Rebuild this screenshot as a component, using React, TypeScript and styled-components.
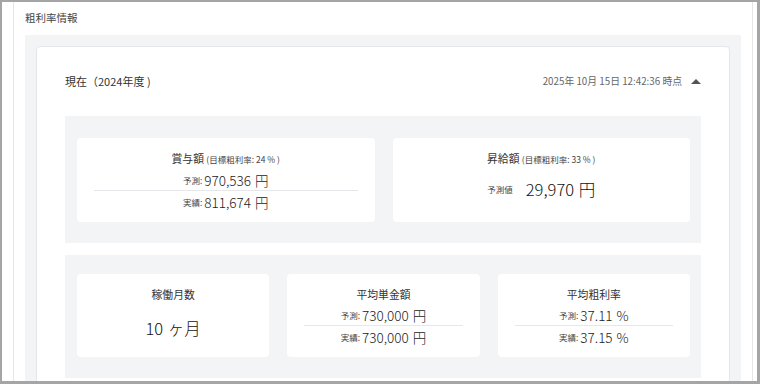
import React from "react";
import styled, { createGlobalStyle } from "styled-components";

const Global = createGlobalStyle`
  html, body { margin: 0; padding: 0; background: #ffffff; }
  body { font-family: "Noto Sans CJK JP", "Noto Sans", sans-serif; color: #333; }
  * { box-sizing: border-box; }
`;

const Frame = styled.div`
  width: 760px;
  height: 384px;
  border-style: solid;
  border-color: #a5a5a5;
  border-width: 2px 3px 3px 2px;
  background: #fff;
  overflow: hidden;
`;

const Section = styled.section`
  margin: 0 4px 0 11px;
  padding: 8px 11px 0;
  border-left: 1px solid #e6e6e6;
  border-right: 1px solid #e6e6e6;
  height: 100%;
`;

const SectionTitle = styled.h2`
  margin: 0 0 10px;
  font-size: 10.5px;
  line-height: 15px;
  font-weight: 400;
  color: #444;
`;

const GrayArea = styled.div`
  background: #f3f4f6;
  padding: 11px 11px 0;
  height: 100%;
`;

const Card = styled.div`
  background: #fff;
  border: 1px solid #e4e6ea;
  border-radius: 4px;
  padding: 0 28px;
  height: 100%;
`;

const Header = styled.div`
  display: flex;
  align-items: center;
  justify-content: space-between;
  height: 69px;
  padding-bottom: 1px;
`;

const HeaderTitle = styled.div`
  font-size: 11px;
  color: #333;
`;

const HeaderRight = styled.div`
  display: flex;
  align-items: center;
  gap: 9px;
  font-size: 9.8px;
  color: #666;
`;

const Caret = styled.span`
  width: 0;
  height: 0;
  border-left: 5px solid transparent;
  border-right: 5px solid transparent;
  border-bottom: 5px solid #555;
`;

const Panel = styled.div<{ $cols: number; $top: number }>`
  display: grid;
  grid-template-columns: repeat(${(p) => p.$cols}, 1fr);
  gap: 18px;
  background: #f3f4f6;
  padding: ${(p) => p.$top}px 11px 21px 12px;
  margin-bottom: 12px;
`;

const StatCard = styled.div`
  background: #fff;
  border-radius: 4px;
  padding: 12px 0 11px;
  display: flex;
  flex-direction: column;
  align-items: center;
  text-align: center;
`;

const StatTitle = styled.div`
  font-size: 10.8px;
  line-height: 16px;
  color: #333;
  margin-bottom: 3px;
`;

const Note = styled.span`
  font-size: 8.5px;
  color: #444;
`;

const Rows = styled.div`
  align-self: stretch;
  padding: 0 17px;
`;

const Row = styled.div<{ $divider?: boolean }>`
  display: flex;
  align-items: center;
  justify-content: center;
  border-top: ${(p) => (p.$divider ? "1px solid #e5e7eb" : "none")};
  height: ${(p) => (p.$divider ? "21px" : "20px")};
  padding-top: ${(p) => (p.$divider ? "1px" : "0")};
`;

const Label = styled.span`
  font-size: 8.5px;
  color: #444;
`;

const Value = styled.span`
  font-size: 13.5px;
  font-weight: 300;
  color: #222;
  margin-left: 2px;
  word-spacing: 1px;
`;

const BigRow = styled.div<{ $gap: number }>`
  margin-top: ${(p) => p.$gap}px;
  display: flex;
  align-items: center;
  gap: 13px;
  line-height: 24px;
`;

const BigValue = styled.span`
  font-size: 16.5px;
  font-weight: 300;
  color: #111;
  word-spacing: 1px;
`;

type DualProps = { title: React.ReactNode; forecast: string; actual: string };

const DualStat: React.FC<DualProps> = ({ title, forecast, actual }) => (
  <StatCard>
    <StatTitle>{title}</StatTitle>
    <Rows>
      <Row>
        <Label>予測:</Label>
        <Value>{forecast}</Value>
      </Row>
      <Row $divider>
        <Label>実績:</Label>
        <Value>{actual}</Value>
      </Row>
    </Rows>
  </StatCard>
);

export default function App() {
  return (
    <>
      <Global />
      <Frame>
        <Section>
          <SectionTitle>粗利率情報</SectionTitle>
          <GrayArea>
            <Card>
              <Header>
                <HeaderTitle>現在（2024年度 )</HeaderTitle>
                <HeaderRight>
                  <span>2025年 10月 15日 12:42:36 時点</span>
                  <Caret />
                </HeaderRight>
              </Header>
              <Panel $cols={2} $top={22}>
                <DualStat
                  title={
                    <>
                      賞与額 <Note>(目標粗利率: 24 % )</Note>
                    </>
                  }
                  forecast="970,536 円"
                  actual="811,674 円"
                />
                <StatCard>
                  <StatTitle>
                    昇給額 <Note>(目標粗利率: 33 % )</Note>
                  </StatTitle>
                  <BigRow $gap={7}>
                    <Label>予測値</Label>
                    <BigValue>29,970 円</BigValue>
                  </BigRow>
                </StatCard>
              </Panel>
              <Panel $cols={3} $top={19}>
                <StatCard>
                  <StatTitle>稼働月数</StatTitle>
                  <BigRow $gap={11}>
                    <BigValue>10 ヶ月</BigValue>
                  </BigRow>
                </StatCard>
                <DualStat title="平均単金額" forecast="730,000 円" actual="730,000 円" />
                <DualStat title="平均粗利率" forecast="37.11 %" actual="37.15 %" />
              </Panel>
            </Card>
          </GrayArea>
        </Section>
      </Frame>
    </>
  );
}
